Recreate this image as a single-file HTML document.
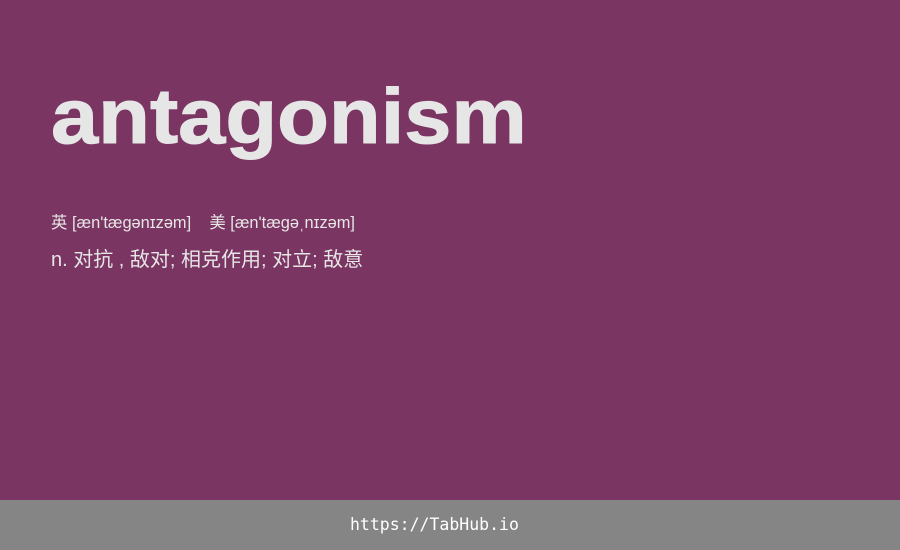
<!DOCTYPE html>
<html><head><meta charset="utf-8"><style>
body{margin:0;width:900px;height:550px;background:#7b3562;position:relative;overflow:hidden;font-family:"Liberation Sans","Noto Sans CJK SC",sans-serif;color:#e6e6e6}
.w{position:absolute;left:51px;top:66px;font-size:78px;font-weight:bold;line-height:100px;transform:scaleX(1.087);transform-origin:0 0;-webkit-text-stroke:1px #e6e6e6}
.p{position:absolute;left:51px;top:212px;font-size:16.4px;line-height:22px;white-space:pre}
.d{position:absolute;left:51px;top:247px;font-size:20px;line-height:26px;white-space:pre}
.f{position:absolute;left:0;top:500px;width:900px;height:50px;background:#858585;color:#fff;font-family:"DejaVu Sans Mono",monospace;font-size:16.5px;line-height:50px}
.f span{position:absolute;left:350px;top:0}
</style></head><body>
<div class="w">antagonism</div>
<div class="p">英 [æn'tægənɪzəm]    美 [æn'tægəˌnɪzəm]</div>
<div class="d">n. 对抗 , 敌对; 相克作用; 对立; 敌意</div>
<div class="f"><span>https://TabHub.io</span></div>
</body></html>
